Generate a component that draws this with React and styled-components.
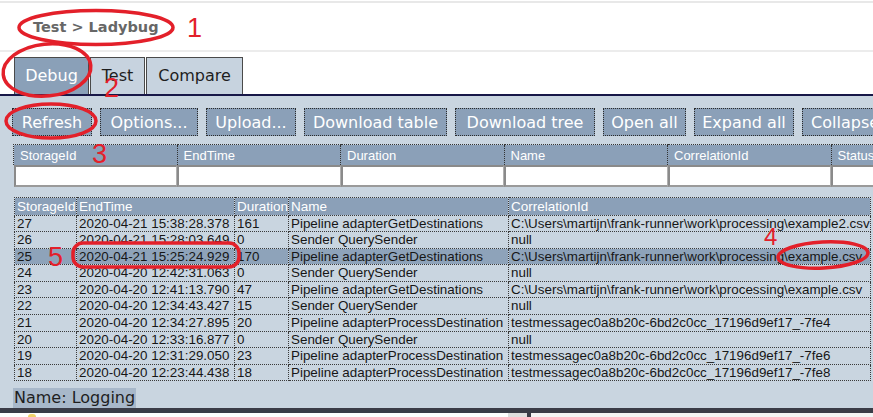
import React from "react";
import styled, { createGlobalStyle } from "styled-components";

const GlobalStyle = createGlobalStyle`
  html, body {
    margin: 0;
    padding: 0;
    background: #ffffff;
    overflow: hidden;
  }
`;

const Page = styled.div`
  position: relative;
  width: 873px;
  height: 417px;
  overflow: hidden;
  display: flex;
  flex-direction: column;
  background: #ffffff;
  font-family: "DejaVu Sans", Verdana, sans-serif;
`;

const TitleBar = styled.header`
  flex-shrink: 0;
  margin-top: 1px;
  height: 51px;
  border-top: 2px solid #e8e8e8;
  border-bottom: 2px solid #ececec;
  display: flex;
  align-items: center;
  padding-left: 33px;
  box-sizing: border-box;
  h1 {
    margin: 0;
    font-size: 14.5px;
    font-weight: bold;
    color: #676767;
  }
`;

const TabBar = styled.nav`
  flex-shrink: 0;
  height: 44px;
  display: flex;
  align-items: flex-end;
  padding-left: 14px;
  border-bottom: 2px solid #181848;
  box-sizing: border-box;
`;

const Tab = styled.div`
  width: ${(p) => p.w}px;
  height: 37px;
  box-sizing: border-box;
  display: flex;
  align-items: center;
  justify-content: center;
  padding-bottom: 2px;
  font-size: 16px;
  border: 1px solid #4a4a4a;
  border-bottom: none;
  margin-right: 1px;
  background: ${(p) => (p.active ? "#8aa0b8" : "#c7d3df")};
  color: ${(p) => (p.active ? "#ffffff" : "#1e1e1e")};
`;

const Panel = styled.main`
  flex: 1;
  min-height: 0;
  background: #c9d5e0;
  padding: 12px 0 0 12px;
  overflow: hidden;
  display: flex;
  flex-direction: column;
`;

const Toolbar = styled.div`
  display: flex;
  gap: 8px;
  flex-wrap: nowrap;
  flex-shrink: 0;
`;

const Button = styled.div`
  flex-shrink: 0;
  width: ${(p) => p.w}px;
  height: 28px;
  box-sizing: border-box;
  border: 1px dotted #2a2a2a;
  background: #8ba0b8;
  color: #ffffff;
  font-size: 16px;
  display: flex;
  align-items: center;
  justify-content: center;
  white-space: nowrap;
  overflow: hidden;
`;

const FilterTable = styled.table`
  flex-shrink: 0;
  margin-top: 8px;
  margin-left: 1px;
  border-collapse: collapse;
  table-layout: fixed;
  width: 1145px;
  font-family: "Liberation Sans", Arial, sans-serif;
  font-size: 13px;

  th {
    background: #8ba0b8;
    color: #ffffff;
    font-weight: normal;
    text-align: left;
    padding: 2px 0 0 6px;
    height: 20px;
    box-sizing: border-box;
    border-top: 1px dotted #333;
    border-left: 1px dotted #333;
  }

  td {
    padding: 0;
    height: 23px;
  }
`;

const FilterInput = styled.div`
  height: 22px;
  box-sizing: border-box;
  background: #ffffff;
  border-top: 2px solid #8a8a8a;
  border-left: 2px solid #8a8a8a;
  border-bottom: 2px solid #9a9a9a;
  border-right: 1px solid #b0b0b0;
`;

const ReportTable = styled.table`
  flex-shrink: 0;
  margin-top: 9px;
  margin-left: 2px;
  border-collapse: collapse;
  table-layout: fixed;
  width: 856px;
  font-family: "Liberation Sans", Arial, sans-serif;

  th,
  td {
    border: 1px dotted #3a3a3a;
    padding: 0 0 0 2px;
    white-space: nowrap;
    overflow: hidden;
    text-align: left;
  }

  th {
    background: #8ba0b8;
    color: #ffffff;
    font-weight: normal;
    font-size: 13.5px;
    line-height: 17px;
  }

  td {
    color: #161616;
    font-size: 13.4px;
    line-height: 15.6px;
  }
`;

const Row = styled.tr`
  background: ${(p) => (p.selected ? "#8ea3ba" : "transparent")};
`;

const NameLine = styled.div`
  flex-shrink: 0;
  margin-top: 7px;
  span {
    display: inline-block;
    background: #a8b8ca;
    color: #1e1e1e;
    font-size: 16px;
    line-height: 20px;
    padding: 0 1px;
    margin-left: 1px;
  }
`;

const DarkBar = styled.div`
  flex-shrink: 0;
  height: 5px;
  background: #3a3c47;
`;

const BottomStrip = styled.div`
  flex-shrink: 0;
  height: 4px;
  display: flex;
`;

const StripPane = styled.div`
  width: ${(p) => p.w}px;
  flex: ${(p) => (p.w ? "none" : 1)};
  background: ${(p) => p.bg};
  display: flex;
  padding-left: ${(p) => p.pad || 0}px;
`;

const FolderTip = styled.div`
  width: 8px;
  height: 3px;
  margin-top: 1px;
  border-radius: 3px 3px 0 0;
  background: #f2d36b;
`;

const Overlay = styled.svg`
  position: absolute;
  left: 0;
  top: 0;
  pointer-events: none;
  font-family: "Liberation Sans", Arial, sans-serif;
`;

const columns = ["StorageId", "EndTime", "Duration", "Name", "CorrelationId", "Status", ""];

const reportCols = [
  { label: "StorageId", w: 62 },
  { label: "EndTime", w: 158 },
  { label: "Duration", w: 54 },
  { label: "Name", w: 220 },
  { label: "CorrelationId", w: 362 },
];

const exampleCsv = "C:\\Users\\martijn\\frank-runner\\work\\processing\\example.csv";

const reports = [
  ["27", "2020-04-21 15:38:28.378", "161", "Pipeline adapterGetDestinations", "C:\\Users\\martijn\\frank-runner\\work\\processing\\example2.csv"],
  ["26", "2020-04-21 15:28:03.649", "0", "Sender QuerySender", "null"],
  ["25", "2020-04-21 15:25:24.929", "170", "Pipeline adapterGetDestinations", exampleCsv],
  ["24", "2020-04-20 12:42:31.063", "0", "Sender QuerySender", "null"],
  ["23", "2020-04-20 12:41:13.790", "47", "Pipeline adapterGetDestinations", exampleCsv],
  ["22", "2020-04-20 12:34:43.427", "15", "Sender QuerySender", "null"],
  ["21", "2020-04-20 12:34:27.895", "20", "Pipeline adapterProcessDestination", "testmessagec0a8b20c-6bd2c0cc_17196d9ef17_-7fe4"],
  ["20", "2020-04-20 12:33:16.877", "0", "Sender QuerySender", "null"],
  ["19", "2020-04-20 12:31:29.050", "23", "Pipeline adapterProcessDestination", "testmessagec0a8b20c-6bd2c0cc_17196d9ef17_-7fe6"],
  ["18", "2020-04-20 12:23:44.438", "18", "Pipeline adapterProcessDestination", "testmessagec0a8b20c-6bd2c0cc_17196d9ef17_-7fe8"],
];

const buttons = [
  { label: "Refresh", w: 80 },
  { label: "Options...", w: 98 },
  { label: "Upload...", w: 90 },
  { label: "Download table", w: 143 },
  { label: "Download tree", w: 140 },
  { label: "Open all", w: 83 },
  { label: "Expand all", w: 100 },
  { label: "Collapse all", w: 110 },
];

const RED = "#e3202a";

const Annotations = () => (
  <Overlay width="873" height="417" viewBox="0 0 873 417">
    <g fill="none" stroke={RED} strokeWidth="3.5">
      <ellipse cx="96" cy="27.5" rx="77" ry="17" />
      <ellipse cx="47" cy="70" rx="44" ry="26" transform="rotate(-6 47 70)" />
      <ellipse cx="51" cy="121" rx="45" ry="17" />
      <rect x="73" y="243" width="166" height="24" rx="10" />
      <ellipse cx="823" cy="255" rx="45" ry="13" transform="rotate(-3 823 255)" />
    </g>
    <g fill={RED} fontSize="27">
      <text x="187" y="37">1</text>
      <text x="104" y="97">2</text>
      <text x="92" y="163">3</text>
      <text x="764" y="245" fontSize="24">4</text>
      <text x="48" y="266">5</text>
    </g>
  </Overlay>
);

const App = () => {
  return (
    <Page>
      <GlobalStyle />
      <TitleBar>
        <h1>Test &gt; Ladybug</h1>
      </TitleBar>
      <TabBar>
        <Tab active w={75}>Debug</Tab>
        <Tab w={55}>Test</Tab>
        <Tab w={97}>Compare</Tab>
      </TabBar>
      <Panel>
        <Toolbar>
          {buttons.map((b) => (
            <Button key={b.label} w={b.w}>
              {b.label}
            </Button>
          ))}
        </Toolbar>
        <FilterTable>
          <colgroup>
            {columns.map((c, i) => (
              <col key={i} style={{ width: 163.5 }} />
            ))}
          </colgroup>
          <thead>
            <tr>
              {columns.map((c, i) => (
                <th key={i}>{c}</th>
              ))}
            </tr>
          </thead>
          <tbody>
            <tr>
              {columns.map((c, i) => (
                <td key={i}>
                  <FilterInput />
                </td>
              ))}
            </tr>
          </tbody>
        </FilterTable>
        <ReportTable>
          <colgroup>
            {reportCols.map((c) => (
              <col key={c.label} style={{ width: c.w }} />
            ))}
          </colgroup>
          <thead>
            <tr>
              {reportCols.map((c) => (
                <th key={c.label}>{c.label}</th>
              ))}
            </tr>
          </thead>
          <tbody>
            {reports.map((r) => (
              <Row key={r[0]} selected={r[0] === "25"}>
                {r.map((cell, i) => (
                  <td key={i}>{cell}</td>
                ))}
              </Row>
            ))}
          </tbody>
        </ReportTable>
        <NameLine>
          <span>Name: Logging</span>
        </NameLine>
      </Panel>
      <DarkBar />
      <BottomStrip>
        <StripPane w={480} bg="#ffffff" pad={28}>
          <FolderTip />
        </StripPane>
        <StripPane w={19} bg="#dedede" />
        <StripPane w={4} bg="#3a3c47" />
        <StripPane bg="#f4f4f4" />
      </BottomStrip>
      <Annotations />
    </Page>
  );
};

export default App;
